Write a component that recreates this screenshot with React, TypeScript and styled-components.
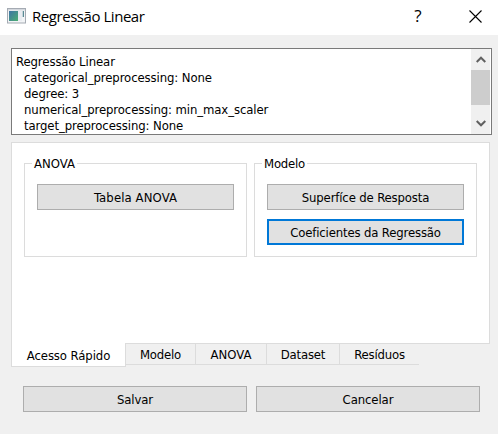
import React from "react";
import styled, { createGlobalStyle } from "styled-components";

const GlobalStyle = createGlobalStyle`
  * { box-sizing: border-box; }
  body { margin: 0; background: #f0f0f0; overflow: hidden; }
`;

const Dialog = styled.div`
  width: 498px;
  height: 434px;
  background: #f0f0f0;
  color: #000;
  font: 13px/16px "DejaVu Sans Condensed", "DejaVu Sans", sans-serif;
  font-stretch: condensed;
  display: flex;
  flex-direction: column;
`;

const TitleBar = styled.header`
  height: 35px;
  flex: none;
  background: #fff;
  display: flex;
  align-items: center;
  padding: 0 16px 3px 7px;
`;

const Title = styled.h1`
  flex: 1;
  margin: 0 0 0 6px;
  font: 400 15px/20px "Open Sans", sans-serif;
  letter-spacing: -0.45px;
`;

const HelpButton = styled.span`
  width: 10px;
  margin-right: 46px;
  font: 400 17px/20px "Open Sans", sans-serif;
  text-align: center;
`;

const Label = styled.span<{ $spacing?: number }>`
  letter-spacing: ${(p) => p.$spacing ?? 0}px;
  white-space: nowrap;
`;

const Summary = styled.section`
  width: 481px;
  height: 87px;
  flex: none;
  margin: 13px 0 0 11px;
  border: 1px solid #7a7a7a;
  background: #fff;
  display: flex;
  padding-right: 1px;
`;

const SummaryText = styled.div`
  flex: 1;
  padding: 5px 0 0 4px;
  overflow: hidden;
`;

const SummaryLine = styled.div<{ $indent?: boolean }>`
  height: 16px;
  padding-left: ${(p) => (p.$indent ? 8 : 0)}px;
`;

const ScrollBar = styled.div`
  width: 19px;
  background: #f0f0f0;
  display: flex;
  flex-direction: column;
`;

const ScrollArrow = styled.div`
  height: 21px;
  display: flex;
  align-items: center;
  justify-content: center;
`;

const ScrollThumb = styled.div`
  height: 35px;
  margin-bottom: 8px;
  background: #cdcdcd;
`;

const TabPane = styled.main`
  width: 479px;
  height: 202px;
  flex: none;
  margin: 7px 0 0 11px;
  padding: 13px 12px 0;
  border: 1px solid #dcdcdc;
  background: #fff;
  display: flex;
  gap: 7px;
`;

const Group = styled.fieldset`
  width: 223px;
  height: 101px;
  min-width: 0;
  margin: 0;
  padding: 13px 12px 0;
  border: 1px solid #dcdcdc;
  display: flex;
  flex-direction: column;
  gap: 9px;
`;

const Legend = styled.legend`
  height: 15px;
  margin-left: -5px;
  padding: 0 2px;
  white-space: nowrap;
`;

const Button = styled.button<{ $focused?: boolean; $wide?: boolean }>`
  width: ${(p) => (p.$wide ? 224 : 197)}px;
  height: 26px;
  flex: none;
  padding: 1px 0 0;
  border: ${(p) => (p.$focused ? "2px solid #0078d7" : "1px solid #adadad")};
  background: #e1e1e1;
  color: #000;
  font: inherit;
  line-height: 16px;
  display: flex;
  align-items: center;
  justify-content: center;
`;

const TabStrip = styled.nav`
  height: 24px;
  flex: none;
  margin: -1px 0 0 11px;
  display: flex;
  align-items: flex-start;
`;

const Tab = styled.div<{ $width: number; $active?: boolean; $last?: boolean }>`
  width: ${(p) => p.$width}px;
  height: ${(p) => (p.$active ? 24 : 22)}px;
  padding-top: ${(p) => (p.$active ? 5 : 3)}px;
  border: 1px solid #dcdcdc;
  border-left-width: ${(p) => (p.$active ? 1 : 0)}px;
  border-right-width: ${(p) => (p.$last ? 0 : 1)}px;
  border-top-width: ${(p) => (p.$active ? 0 : 1)}px;
  background: ${(p) => (p.$active ? "#fff" : "#f0f0f0")};
  text-align: center;
`;

const Actions = styled.footer`
  display: flex;
  gap: 9px;
  padding: 19px 0 0 23px;
`;

const AppIcon = () => (
  <svg width="19" height="16" viewBox="0 0 19 16">
    <defs>
      <linearGradient id="screen" x1="0" y1="0" x2="1" y2="1">
        <stop offset="0" stopColor="#3f74a6" />
        <stop offset="1" stopColor="#4cae72" />
      </linearGradient>
    </defs>
    <rect x="0.5" y="0.5" width="18" height="14.5" fill="#f2f4f6" stroke="#a5abb3" />
    <rect x="1" y="1" width="17" height="1.4" fill="#d3d7dd" />
    <rect x="2" y="3" width="9" height="10" fill="url(#screen)" />
    <rect x="11" y="3" width="4" height="10" fill="#e9ecf1" />
    <rect x="15.7" y="3" width="1.3" height="6" fill="#5a8a94" />
  </svg>
);

const CloseIcon = () => (
  <svg width="13" height="13" viewBox="0 0 13 13">
    <path d="M0.5 0.5 12.5 12.5M12.5 0.5 0.5 12.5" stroke="#000" strokeWidth="1.1" />
  </svg>
);

const Chevron = ({ down }: { down?: boolean }) => (
  <svg width="10" height="7" viewBox="0 0 10 7">
    <path d={down ? "M0.7 1 5 5.3 9.3 1" : "M0.7 6 5 1.7 9.3 6"} fill="none" stroke="#606060" strokeWidth="2" />
  </svg>
);

const lines = [
  { text: "Regressão Linear", spacing: -0.1 },
  { text: "categorical_preprocessing: None", spacing: -0.1 },
  { text: "degree: 3", spacing: -0.1 },
  { text: "numerical_preprocessing: min_max_scaler", spacing: -0.1 },
  { text: "target_preprocessing: None", spacing: -0.1 },
];

const tabs = [
  { name: "Acesso Rápido", width: 115, spacing: -0.1 },
  { name: "Modelo", width: 70, spacing: -0.2 },
  { name: "ANOVA", width: 71, spacing: 0 },
  { name: "Dataset", width: 73, spacing: -0.2 },
  { name: "Resíduos", width: 79, spacing: -0.2 },
];

export default function App() {
  return (
    <>
      <GlobalStyle />
      <Dialog>
        <TitleBar>
          <AppIcon />
          <Title>Regressão Linear</Title>
          <HelpButton>?</HelpButton>
          <CloseIcon />
        </TitleBar>
        <Summary>
          <SummaryText>
            {lines.map((line, i) => (
              <SummaryLine key={line.text} $indent={i > 0}>
                <Label $spacing={line.spacing}>{line.text}</Label>
              </SummaryLine>
            ))}
          </SummaryText>
          <ScrollBar>
            <ScrollArrow><Chevron /></ScrollArrow>
            <ScrollThumb />
            <ScrollArrow><Chevron down /></ScrollArrow>
          </ScrollBar>
        </Summary>
        <TabPane>
          <Group>
            <Legend><Label>ANOVA</Label></Legend>
            <Button><Label $spacing={0.1}>Tabela ANOVA</Label></Button>
          </Group>
          <Group>
            <Legend><Label $spacing={-0.2}>Modelo</Label></Legend>
            <Button><Label $spacing={-0.15}>Superfíce de Resposta</Label></Button>
            <Button $focused><Label $spacing={-0.15}>Coeficientes da Regressão</Label></Button>
          </Group>
        </TabPane>
        <TabStrip>
          {tabs.map((tab, i) => (
            <Tab key={tab.name} $width={tab.width} $active={i === 0} $last={i === tabs.length - 1}>
              <Label $spacing={tab.spacing}>{tab.name}</Label>
            </Tab>
          ))}
        </TabStrip>
        <Actions>
          <Button $wide><Label $spacing={-0.1}>Salvar</Label></Button>
          <Button $wide><Label $spacing={-0.1}>Cancelar</Label></Button>
        </Actions>
      </Dialog>
    </>
  );
}
